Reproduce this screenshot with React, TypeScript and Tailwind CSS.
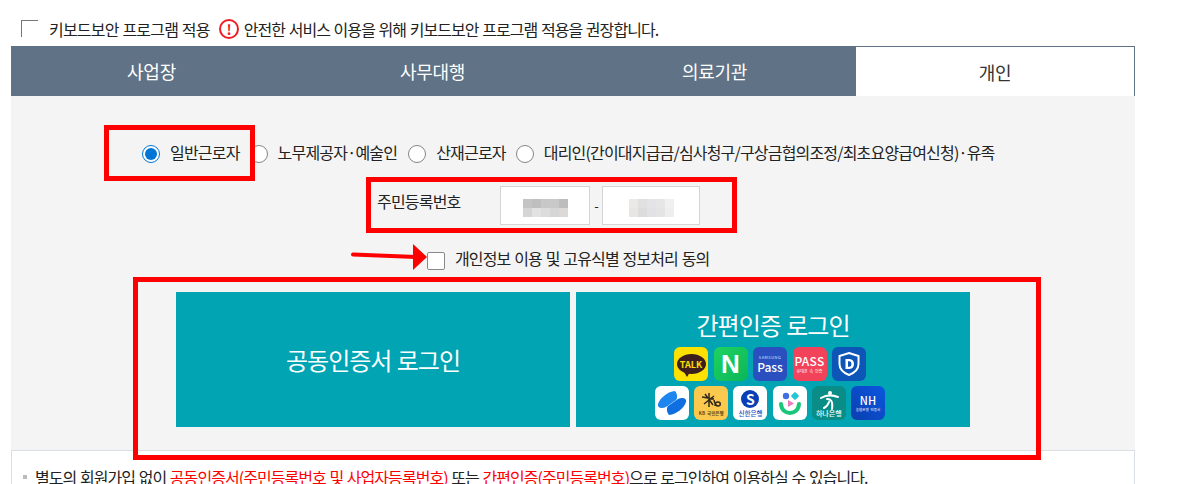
const font = "font-['Noto_Sans_CJK_KR','Noto_Sans',sans-serif]";

function Radio({ checked }: { checked?: boolean }) {
  return (
    <span
      className={`flex h-[18px] w-[18px] shrink-0 items-center justify-center rounded-full border bg-white ${checked ? "border-[#0075d6]" : "border-[#858585]"}`}
    >
      {checked && <span className="h-[12px] w-[12px] rounded-full bg-[#0075d6]" />}
    </span>
  );
}

function Blur({ cells }: { cells: string[] }) {
  return (
    <div className="grid grid-cols-5 gap-0">
      {cells.map((c, i) => (
        <div key={i} className={`h-[9px] w-[9px] ${c}`} />
      ))}
    </div>
  );
}

const blurA = [
  "bg-[#c6c4c2]", "bg-[#bfbfbf]", "bg-[#c8c8c8]", "bg-[#c9c9c9]", "bg-[#bdbdbd]",
  "bg-[#d5d5d5]", "bg-[#e2e2e2]", "bg-[#dcdcdc]", "bg-[#d6d6d6]", "bg-[#dcd9d6]",
];
const blurB = [
  "bg-[#ebe9e8]", "bg-[#e0e0e0]", "bg-[#e4e4e6]", "bg-[#e6e6e6]", "bg-[#f0f0f0]",
  "bg-[#e8e6e5]", "bg-[#dcdcdc]", "bg-[#e2e2e4]", "bg-[#e4e4e4]", "bg-[#eeeeee]",
];

function Tile({ className, children }: { className: string; children: React.ReactNode }) {
  return (
    <div className={`flex h-[34px] w-[34px] flex-col items-center justify-center overflow-hidden rounded-[6px] tracking-normal ${className}`}>
      {children}
    </div>
  );
}

function AuthIcons() {
  return (
    <div className="mt-[8px] flex flex-col items-center gap-[5px] pr-[6px]">
      <div className="flex gap-[5.5px]">
        <Tile className="bg-[#fbe000]">
          <div className="relative flex h-[20px] w-[29px] items-center justify-center rounded-[50%] bg-[#3c1e1e]">
            <span className="text-[9px] font-bold leading-none text-[#fbe000]">TALK</span>
            <span className="absolute bottom-[-3px] left-[7px] h-0 w-0 border-x-[3px] border-t-[5px] border-x-transparent border-t-[#3c1e1e]" />
          </div>
        </Tile>
        <Tile className="bg-gradient-to-br from-[#1fd35f] to-[#08b65a]">
          <span className="font-['Liberation_Sans',sans-serif] text-[26px] font-bold leading-none text-white">N</span>
        </Tile>
        <Tile className="bg-[#2a4fbf]">
          <span className="text-[4px] leading-[5px] tracking-[0.5px] text-[#dfe6fb]">SAMSUNG</span>
          <span className="mt-[1px] text-[12px] font-medium leading-[12px] text-white">Pass</span>
        </Tile>
        <Tile className="bg-[#f2435a]">
          <span className="text-[12px] font-medium leading-none tracking-[0.3px] text-white">PASS</span>
          <span className="mt-[2px] text-[4px] leading-none text-white">휴대폰 속 인증</span>
        </Tile>
        <Tile className="bg-[#0e55b8]">
          <svg width="24" height="26" viewBox="0 0 24 26">
            <path d="M12 2 L21.500 5 V13 C21.500 18.500 17 22 12 24 C7 22 2.500 18.500 2.500 13 V5 Z" fill="none" stroke="#fff" strokeWidth="2" />
            <path d="M8.500 8 H12.500 C15.500 8 17 10.200 17 13 C17 15.800 15.500 18 12.500 18 H8.500 Z M11 10.300 V15.700 H12.300 C13.800 15.700 14.400 14.500 14.400 13 C14.400 11.500 13.800 10.300 12.300 10.300 Z" fill="#fff" fillRule="evenodd" />
          </svg>
        </Tile>
      </div>
      <div className="flex gap-[5.2px]">
        <Tile className="bg-white">
          <svg width="30" height="28" viewBox="0 0 30 28">
            <path d="M18 2 C10 3 3 9 1 15 C0 19 5 20 9 18 L19 11 C21 9 20 4 18 2 Z" fill="#1f86f0" />
            <path d="M12 26 C20 25 27 19 29 13 C30 9 25 8 21 10 L11 17 C9 19 10 24 12 26 Z" fill="#0f6fe0" />
          </svg>
        </Tile>
        <Tile className="bg-[#fbc94e]">
          <svg width="22" height="18" viewBox="0 0 22 18" className="mt-[1px]">
            <path d="M2 5 L14 7 M9 1 V15 M4 12 L14 4 M5 2 L13 13 M14 8 C15 13 16 14 18 14 C21 14 21 10 18 10 C16 10 15 12 15 14" fill="none" stroke="#33291a" strokeWidth="1.500" />
          </svg>
          <span className="mt-[1px] text-[4.500px] font-bold leading-none text-[#5c4a1a]">KB 국민은행</span>
        </Tile>
        <Tile className="bg-white">
          <span className="flex h-[18px] w-[18px] items-center justify-center rounded-full bg-[#0a3fb5] text-[14px] font-bold leading-none text-white">S</span>
          <span className="mt-[2px] text-[6.500px] font-medium leading-none text-[#1a4fc0]">신한은행</span>
        </Tile>
        <Tile className="bg-white">
          <svg width="28" height="28" viewBox="0 0 28 28">
            <circle cx="10" cy="7" r="3.200" fill="#3f6fe0" />
            <rect x="16" y="4" width="6" height="6" rx="1" transform="rotate(45 19 7)" fill="#22c7d6" />
            <path d="M12 11 L18 14.500 L12 18 Z" fill="#f07ac0" />
            <path d="M5 15 C6 27 22 27 23 15" fill="none" stroke="#18c77a" strokeWidth="4" strokeLinecap="round" />
          </svg>
        </Tile>
        <Tile className="bg-[#0a8d86]">
          <svg width="22" height="20" viewBox="0 0 22 20">
            <circle cx="12" cy="3" r="2" fill="#fff" />
            <path d="M3 8 C8 5 15 5 20 7 M9 9 C13 9 15 11 14 19 M11 12 C10 15 8 17 6 18" fill="none" stroke="#fff" strokeWidth="2" strokeLinecap="round" />
          </svg>
          <span className="text-[7px] font-medium leading-none text-white">하나은행</span>
        </Tile>
        <Tile className="bg-gradient-to-tr from-[#0a3fb0] to-[#0b57e0]">
          <span className="text-[11px] font-medium leading-none text-white">NH</span>
          <span className="mt-[2px] text-[3.500px] leading-none text-white">농협은행 인증서</span>
        </Tile>
      </div>
    </div>
  );
}

export default function App() {
  return (
    <div className={`relative h-[484px] w-[1182px] overflow-hidden bg-white text-[16px] leading-none tracking-[-0.8px] text-[#222] [word-spacing:1px] ${font}`}>
      {/* top bar */}
      <div className="flex h-[46px] items-center pl-[21px] pt-[11px]">
        <span className="h-[17px] w-[17px] border-l border-t border-[#767676]" />
        <span className="ml-[11px]">키보드보안 프로그램 적용</span>
        <span className="ml-[9px] flex h-[20px] w-[20px] items-center justify-center rounded-full border-2 border-[#ee1c25] text-[14px] font-bold text-[#ee1c25]">!</span>
        <span className="ml-[5px] tracking-[-0.95px]">안전한 서비스 이용을 위해 키보드보안 프로그램 적용을 권장합니다.</span>
      </div>

      <div className="ml-[11px] w-[1124px]">
        {/* tabs */}
        <div className="flex h-[50px] text-[18px] tracking-[-0.3px] text-white">
          <div className="flex w-[281px] items-center justify-center bg-[#607286]">사업장</div>
          <div className="flex w-[281px] items-center justify-center bg-[#607286]">사무대행</div>
          <div className="flex w-[283px] items-center justify-center bg-[#607286]">의료기관</div>
          <div className="flex flex-1 items-center justify-center border-r border-t border-[#607286] bg-white text-[#333]">개인</div>
        </div>

        {/* panel */}
        <div className="flex h-[354px] flex-col bg-[#f4f4f4]">
          <div className="mt-[49px] flex h-[18px] items-center pl-[131px]">
            <Radio checked />
            <span className="mb-[5px] ml-[10px]">일반근로자</span>
            <span className="ml-[10px]"><Radio /></span>
            <span className="mb-[5px] ml-[10px]">노무제공자·예술인</span>
            <span className="ml-[11px]"><Radio /></span>
            <span className="mb-[5px] ml-[10px]">산재근로자</span>
            <span className="ml-[10px]"><Radio /></span>
            <span className="mb-[5px] ml-[10px] tracking-[-0.82px]">대리인(간이대지급금/심사청구/구상금협의조정/최초요양급여신청)·유족</span>
          </div>

          <div className="mt-[23px] flex h-[39px] items-center pl-[366px]">
            <span className="mb-[9px] w-[123px]">주민등록번호</span>
            <div className="flex h-[39px] w-[90px] items-center justify-center border border-[#d5d5d5] bg-white pt-[4px]">
              <Blur cells={blurA} />
            </div>
            <span className="w-[12px] text-center text-[13px]">-</span>
            <div className="flex h-[39px] w-[98px] items-center justify-center border border-[#d5d5d5] bg-white pt-[4px]">
              <Blur cells={blurB} />
            </div>
          </div>

          <div className="mt-[26px] flex h-[19px] items-center pl-[416px]">
            <span className="h-[18px] w-[18px] rounded-[2px] border border-[#8a8a8a] bg-white" />
            <span className="mb-[5px] ml-[10px] tracking-[-0.85px]">개인정보 이용 및 고유식별 정보처리 동의</span>
          </div>

          <div className="mt-[22px] flex h-[135px] gap-[6px] pl-[165px] text-[24px] tracking-[-1px] text-white">
            <div className="flex w-[394px] items-center justify-center bg-[#00a4b3]">공동인증서 로그인</div>
            <div className="flex w-[394px] flex-col items-center bg-[#00a4b3] pt-[19px]">
              <span className="leading-[28px]">간편인증 로그인</span>
              <AuthIcons />
            </div>
          </div>
        </div>

        {/* notice */}
        <div className="h-[60px] border border-[#d9dfe4] bg-white pl-[11px] pt-[18px]">
          <div className="flex items-center">
            <span className="h-[4px] w-[4px] bg-[#bbb]" />
            <span className="ml-[8px] tracking-[-0.95px]">
              별도의 회원가입 없이 <span className="text-[#f00]">공동인증서(주민등록번호 및 사업자등록번호)</span> 또는 <span className="text-[#f00]">간편인증(주민등록번호)</span>으로 로그인하여 이용하실 수 있습니다.
            </span>
          </div>
        </div>
      </div>

      {/* red annotations drawn over the capture */}
      <div className="absolute left-[104px] top-[125px] h-[56px] w-[151px] border-[5px] border-[#f00]" />
      <div className="absolute left-[366px] top-[177px] h-[56px] w-[371px] border-[5px] border-[#f00]" />
      <div className="absolute left-[133px] top-[277px] h-[183px] w-[908px] border-[5px] border-[#f00]" />
      <svg className="absolute left-[350px] top-[242px]" width="80" height="30" viewBox="0 0 80 30">
        <path d="M3 12.500 L66 15" stroke="#f00" strokeWidth="4" strokeLinecap="round" />
        <path d="M63 2 L77 15 L63 28 Z" fill="#f00" />
      </svg>
    </div>
  );
}
